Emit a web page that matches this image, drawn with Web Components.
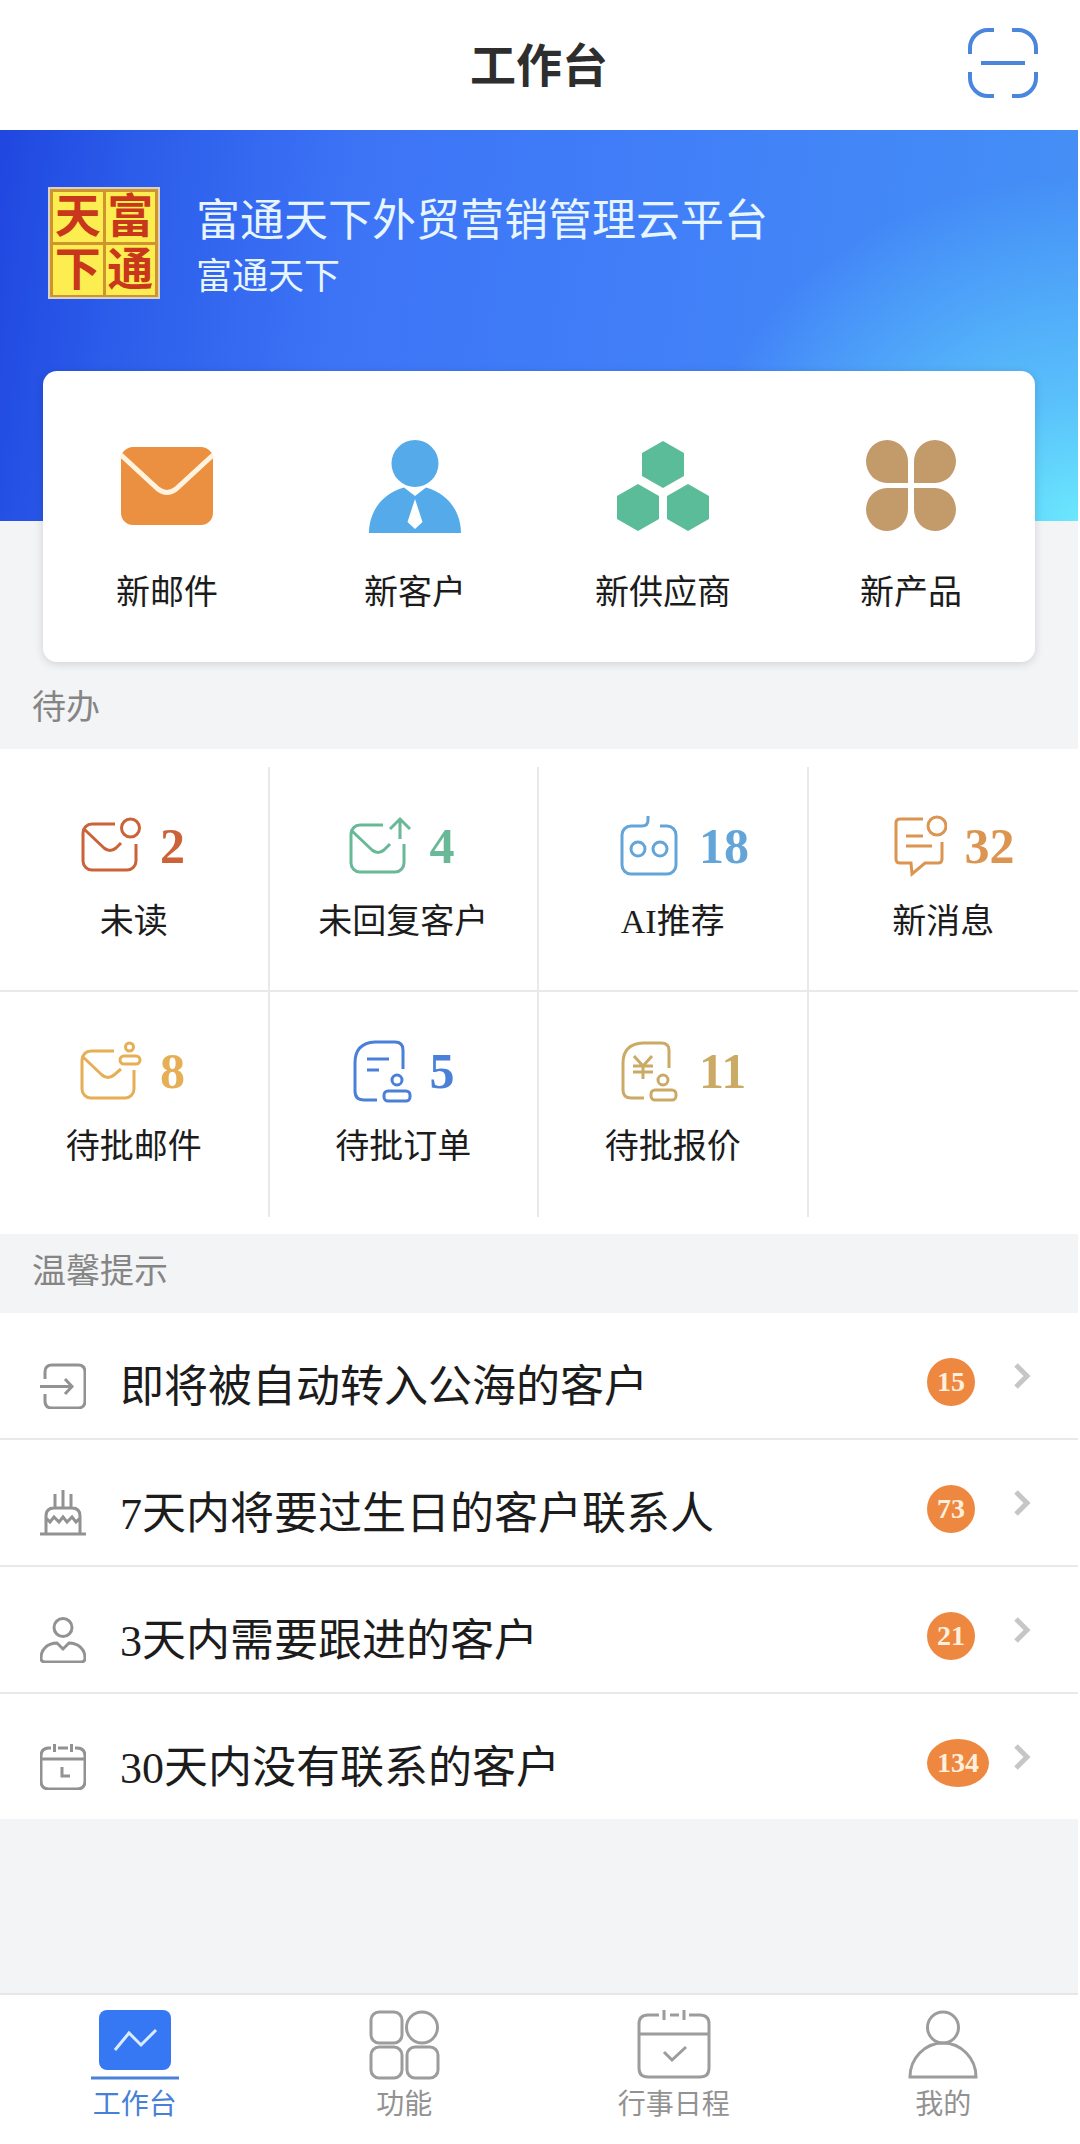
<!DOCTYPE html>
<html lang="zh-CN">
<head>
<meta charset="UTF-8">
<meta name="viewport" content="width=device-width, initial-scale=1.0">
<title>工作台</title>
<style>
    html {
        background: #fff;
    }
    body {
        margin: 0 2px 0 0;
        min-height: 100vh;
        display: flex;
        flex-direction: column;
        color: #1c1c1c;
        font-family: "Liberation Serif", "Noto Sans CJK SC", sans-serif;
    }
    main {
        flex: 1;
        background: #f3f4f6;
    }
</style>
</head>
<body>
    <page-header>工作台</page-header>
    <main>
        <company-banner>
            <span slot="name">富通天下外贸营销管理云平台</span>
            <span slot="short">富通天下</span>
        </company-banner>
        <quick-panel>
            <quick-action icon="mail">新邮件</quick-action>
            <quick-action icon="customer">新客户</quick-action>
            <quick-action icon="supplier">新供应商</quick-action>
            <quick-action icon="product">新产品</quick-action>
        </quick-panel>
        <section-title style="--space-top: 8px">待办</section-title>
        <todo-grid>
            <todo-item icon="unread" count="2" color="#cb6238">未读</todo-item>
            <todo-item icon="unreplied" count="4" color="#69b898">未回复客户</todo-item>
            <todo-item icon="robot" count="18" color="#63a5d8">AI推荐</todo-item>
            <todo-item icon="message" count="32" color="#dc9550">新消息</todo-item>
            <todo-item icon="mailApproval" count="8" color="#e6ae55">待批邮件</todo-item>
            <todo-item icon="orderApproval" count="5" color="#4a80d8">待批订单</todo-item>
            <todo-item icon="quoteApproval" count="11" color="#cbaa66">待批报价</todo-item>
        </todo-grid>
        <section-title>温馨提示</section-title>
        <tip-list>
            <tip-row icon="transfer" count="15">即将被自动转入公海的客户</tip-row>
            <tip-row icon="birthday" count="73">7天内将要过生日的客户联系人</tip-row>
            <tip-row icon="follow" count="21">3天内需要跟进的客户</tip-row>
            <tip-row icon="calendar" count="134">30天内没有联系的客户</tip-row>
        </tip-list>
    </main>
    <tab-bar>
        <tab-item icon="workbench" active>工作台</tab-item>
        <tab-item icon="features">功能</tab-item>
        <tab-item icon="schedule">行事日程</tab-item>
        <tab-item icon="mine">我的</tab-item>
    </tab-bar>

<script>
// 图标：宽、高、内容
const ICONS = {
    scan: [70, 70, `<g fill="none" stroke="#4a87dc" stroke-width="4">
        <path d="M2 26V20A18 18 0 0 1 20 2h6M44 2h6a18 18 0 0 1 18 18v6M68 44v6a18 18 0 0 1-18 18h-6M26 68h-6A18 18 0 0 1 2 50v-6M13 35h44"/></g>`],
    mail: [96, 96, `<rect x="2" y="9" width="92" height="78" rx="12" fill="#ea9040"/>
        <path d="M2 17L39 51q9 7 18 0L94 17" fill="none" stroke="#fff3e0" stroke-width="5"/>`],
    customer: [96, 96, `<g fill="#55aaea"><circle cx="48" cy="25.500" r="23.500"/>
        <path d="M37 49.500L48 58l11-8.500C80 55 94 73 94 95H2C2 73 16 55 37 49.500z"/></g>
        <path d="M48 61l-7.500 23 7.500 7 7.500-7z" fill="#fff"/>`],
    supplier: [96, 96, `<g fill="#5bbc99"><path d="M48 3l21 12v23L48 50 27 38V15z"/>
        <path d="M23 46l21 12v23L23 93 2 81V58z"/><path d="M73 46l21 12v23L73 93 52 81V58z"/></g>`],
    product: [96, 96, `<g fill="#c39b6b"><path d="M45 45H24A21 21.500 0 1 1 45 24z"/><path d="M51 45h21a21 21.500 0 1 0-21-21z"/>
        <path d="M45 50H24a21 21.500 0 1 0 21 21z"/><path d="M51 50h21a21 21.500 0 1 1-21 21z"/></g>`],
    unread: [64, 64, `<path d="M37 10H14a9 9 0 0 0-9 9v28a9 9 0 0 0 9 9h35a9 9 0 0 0 9-9V30M6 15l20 19q6 5 12 0l5-5"/><circle cx="52.500" cy="14" r="9"/>`],
    unreplied: [64, 64, `<path d="M35 11H12a9 9 0 0 0-9 9v29a9 9 0 0 0 9 9h35a9 9 0 0 0 9-9V30M4 17l20 19q6 5 12 0l6-6M52 25V6M42 15L52 5l10 10"/>`],
    robot: [64, 64, `<path d="M31 2v4q0 6-6 6H14a9 9 0 0 0-9 9v30a9 9 0 0 0 9 9h36a9 9 0 0 0 9-9V21a9 9 0 0 0-9-9h-7"/>
        <circle cx="21" cy="35" r="7"/><circle cx="43" cy="35" r="7"/>`],
    message: [60, 64, `<path d="M36 5H13q-4 0-4 4v36q0 4 4 4h11l1 11 13-11h13q4 0 4-4V28M19 22h17M19 32h26"/><circle cx="50" cy="12" r="9"/>`],
    mailApproval: [64, 64, `<path d="M36 12H13a9 9 0 0 0-9 9v29a9 9 0 0 0 9 9h34a9 9 0 0 0 9-9V31M5 18l19 18q6 5 12 0l7-6"/>
        <circle cx="51.500" cy="8" r="4"/><rect x="42" y="17" width="20" height="8" rx="4"/>`],
    orderApproval: [64, 64, `<path d="M55 30V11q0-8-8-8H27Q7 4 7 24v28q0 9 9 9h13M19 20h22M19 31h12"/>
        <circle cx="49" cy="41" r="5"/><rect x="36" y="52" width="26" height="10" rx="4"/>`],
    quoteApproval: [64, 64, `<path d="M52 29V11q0-7-8-7H26Q6 5 6 24v27q0 8 8 8h13M17 17l9 10 9-10M16 27h20M16 33h20M26 27v13"/>
        <circle cx="46" cy="41" r="5"/><rect x="34" y="51" width="25" height="10" rx="4"/>`],
    transfer: [46, 46, `<path d="M5 16V9q0-7 7-7h26q7 0 7 7v29q0 7-7 7H12q-7 0-7-7v-7M0 23.500h31M25 16l7 7.500-7 7.500"/>`],
    birthday: [46, 46, `<path d="M0 44h46M6 44V26q0-8 8-8h18q8 0 8 8v18M15 4v14M23 0v18M31 4v14M6 28l4 4 4-5 5 5 4-5 4 5 5-5 4 5 4-4"/>`],
    follow: [46, 46, `<circle cx="23" cy="10.500" r="9"/><path d="M17 26l6 6 6-6c9 0 16 6 16 15q0 4-4 4H5q-4 0-4-4C1 32 8 26 17 26z"/>`],
    calendar: [46, 46, `<path d="M11 4H9Q1 4 1 12v25q0 8 8 8h28q8 0 8-8V12q0-8-8-8h-2M18 4h10M1 15h44M14.500 0v8M31.500 0v8M22 23v9h8"/>`],
    chevron: [18, 28, `<path d="M3 3l11 11L3 25" fill="none" stroke="#c6c6c6" stroke-width="5"/>`],
    workbench: [90, 70, `<rect x="9" y="0" width="72" height="60" rx="8" fill="#3678f3"/>
        <path d="M25 40l14-17 12 12 15-15" fill="none" stroke="#d9ecff" stroke-width="3"/><path d="M1 68h88" stroke="#4a82d8" stroke-width="3"/>`],
    features: [90, 70, `<rect x="12" y="2" width="31" height="31" rx="8"/><circle cx="63" cy="17.500" r="15.500"/>
        <rect x="12" y="37" width="31" height="31" rx="8"/><rect x="48" y="37" width="31" height="31" rx="8"/>`],
    schedule: [90, 70, `<path d="M30 5H19q-9 0-9 9v44q0 9 9 9h52q9 0 9-9V14q0-9-9-9H60M41 5h9M10 24h70M35 0v10M55 0v10M35 42l8 8 14-13"/>`],
    mine: [90, 70, `<circle cx="45" cy="17.500" r="15.500"/><path d="M12 67a33 34 0 0 1 66 0z"/>`]
};

function icon(name) {
    const [w, h, body] = ICONS[name];
    return `<svg width="${w}" height="${h}" viewBox="0 0 ${w} ${h}" aria-hidden="true">${body}</svg>`;
}

class PageHeader extends HTMLElement {
    constructor() {
        super();
        this.attachShadow({ mode: 'open' });
        this.shadowRoot.innerHTML = `
            <style>
                :host {
                    display: grid;
                    grid-template-columns: 1fr auto 1fr;
                    align-items: center;
                    height: 130px;
                    padding: 0 40px;
                    background: #fff;
                }
                h1 {
                    grid-column: 2;
                    margin: 4px 0 0;
                    font-size: 46px;
                    line-height: 60px;
                    font-weight: 700;
                    color: #2e2e2e;
                }
                button {
                    justify-self: end;
                    display: flex;
                    margin: 0 0 4px;
                    padding: 0;
                    border: 0;
                    background: none;
                }
            </style>
            <h1><slot></slot></h1>
            <button type="button" aria-label="扫一扫">${icon('scan')}</button>
        `;
    }
}

class CompanyBanner extends HTMLElement {
    constructor() {
        super();
        this.attachShadow({ mode: 'open' });
        this.shadowRoot.innerHTML = `
            <style>
                :host {
                    display: flex;
                    align-items: flex-start;
                    gap: 36px;
                    box-sizing: border-box;
                    height: 391px;
                    padding: 57px 48px 0;
                    color: #e6f5ff;
                    background:
                        radial-gradient(ellipse 36% 88% at 100% 100%, #6ae8fd 0%, rgba(95, 205, 252, 0.8) 35%, rgba(75, 160, 248, 0) 100%),
                        linear-gradient(98deg, #2047e0 0%, #2b5cea 12%, #3d74f6 32%, #417ff8 60%, #4591f6 100%);
                }
                .logo {
                    display: grid;
                    grid-template-columns: 1fr 1fr;
                    gap: 3px;
                    box-sizing: border-box;
                    width: 112px;
                    height: 112px;
                    padding: 3px;
                    border: 2px solid #d8d3c4;
                    background: #cf9330;
                    color: #c8371b;
                    font-size: 46px;
                    line-height: 50px;
                    font-weight: 700;
                    text-align: center;
                }
                .logo span {
                    background: #fcee50;
                }
                .name {
                    margin-top: 5px;
                    font-size: 44px;
                    line-height: 60px;
                }
                .short {
                    font-size: 36px;
                    line-height: 50px;
                }
            </style>
            <div class="logo"><span>天</span><span>富</span><span>下</span><span>通</span></div>
            <div>
                <div class="name"><slot name="name"></slot></div>
                <div class="short"><slot name="short"></slot></div>
            </div>
        `;
    }
}

class QuickPanel extends HTMLElement {
    constructor() {
        super();
        this.attachShadow({ mode: 'open' });
        this.shadowRoot.innerHTML = `
            <style>
                :host {
                    display: grid;
                    grid-template-columns: repeat(4, 1fr);
                    position: relative;
                    box-sizing: border-box;
                    height: 291px;
                    margin: -150px 43px 0;
                    padding-top: 67px;
                    border-radius: 14px;
                    background: #fff;
                    box-shadow: 0 2px 10px rgba(0, 0, 0, 0.14);
                }
            </style>
            <slot></slot>
        `;
    }
}

class QuickAction extends HTMLElement {
    connectedCallback() {
        this.attachShadow({ mode: 'open' });
        this.shadowRoot.innerHTML = `
            <style>
                :host {
                    display: block;
                }
                button {
                    display: flex;
                    flex-direction: column;
                    align-items: center;
                    gap: 35px;
                    width: 100%;
                    padding: 0;
                    border: 0;
                    background: none;
                    color: inherit;
                    font: inherit;
                    font-size: 34px;
                    line-height: 48px;
                }
            </style>
            <button type="button">${icon(this.getAttribute('icon'))}<span><slot></slot></span></button>
        `;
    }
}

class SectionTitle extends HTMLElement {
    constructor() {
        super();
        this.attachShadow({ mode: 'open' });
        this.shadowRoot.innerHTML = `
            <style>
                :host {
                    display: block;
                    padding: calc(14px + var(--space-top, 0px)) 32px 17px;
                }
                h2 {
                    margin: 0;
                    font-size: 34px;
                    line-height: 48px;
                    font-weight: 400;
                    color: #858585;
                }
            </style>
            <h2><slot></slot></h2>
        `;
    }
}

class TodoGrid extends HTMLElement {
    constructor() {
        super();
        this.attachShadow({ mode: 'open' });
        this.shadowRoot.innerHTML = `
            <style>
                :host {
                    display: grid;
                    grid-template-columns: repeat(4, 1fr);
                    padding: 18px 0 17px;
                    background: #fff;
                }
                ::slotted(*) {
                    border-right: 2px solid #e9e9e9;
                }
                ::slotted(:nth-child(4n)) {
                    border-right: 0;
                }
                ::slotted(:nth-child(-n + 4)) {
                    border-bottom: 2px solid #e9e9e9;
                }
            </style>
            <slot></slot>
        `;
    }
}

class TodoItem extends HTMLElement {
    connectedCallback() {
        const color = this.getAttribute('color');
        this.attachShadow({ mode: 'open' });
        this.shadowRoot.innerHTML = `
            <style>
                :host {
                    display: block;
                    box-sizing: border-box;
                    height: 225px;
                }
                a {
                    display: block;
                    padding-top: 47px;
                    color: inherit;
                    text-decoration: none;
                }
                .top {
                    display: flex;
                    align-items: center;
                    gap: 18px;
                    padding-left: 78px;
                    color: ${color};
                }
                svg {
                    flex: none;
                    fill: none;
                    stroke: currentColor;
                    stroke-width: 3;
                }
                strong {
                    font-size: 50px;
                    line-height: 64px;
                }
                .label {
                    margin-top: 20px;
                    font-size: 34px;
                    line-height: 48px;
                    text-align: center;
                }
            </style>
            <a href="#">
                <div class="top">${icon(this.getAttribute('icon'))}<strong>${this.getAttribute('count')}</strong></div>
                <div class="label"><slot></slot></div>
            </a>
        `;
    }
}

class TipList extends HTMLElement {
    constructor() {
        super();
        this.attachShadow({ mode: 'open' });
        this.shadowRoot.innerHTML = `
            <style>
                :host {
                    display: block;
                    background: #fff;
                }
                ::slotted(:not(:last-child)) {
                    border-bottom: 2px solid #e9e9e9;
                }
            </style>
            <slot></slot>
        `;
    }
}

class TipRow extends HTMLElement {
    connectedCallback() {
        this.attachShadow({ mode: 'open' });
        this.shadowRoot.innerHTML = `
            <style>
                :host {
                    display: block;
                }
                a {
                    display: grid;
                    grid-template-columns: 46px 1fr 86px 18px;
                    align-items: center;
                    height: 125px;
                    padding: 0 47px 0 40px;
                    color: inherit;
                    text-decoration: none;
                }
                .icon {
                    display: flex;
                    padding-top: 20px;
                    fill: none;
                    stroke: #929292;
                    stroke-width: 3;
                }
                .text {
                    padding: 24px 0 0 34px;
                    font-size: 44px;
                    line-height: 60px;
                }
                .badge {
                    justify-self: start;
                    margin-top: 12px;
                    padding: 0 10px;
                    border-radius: 50%;
                    background: #ee8740;
                    color: #fff0dc;
                    font-size: 28px;
                    line-height: 48px;
                    font-weight: 700;
                }
                .arrow {
                    display: flex;
                }
            </style>
            <a href="#">
                <span class="icon">${icon(this.getAttribute('icon'))}</span>
                <span class="text"><slot></slot></span>
                <span class="badge">${this.getAttribute('count')}</span>
                <span class="arrow">${icon('chevron')}</span>
            </a>
        `;
    }
}

class TabBar extends HTMLElement {
    constructor() {
        super();
        this.attachShadow({ mode: 'open' });
        this.shadowRoot.innerHTML = `
            <style>
                :host {
                    display: block;
                    border-top: 2px solid #e6e8e8;
                    background: #fff;
                }
                nav {
                    display: grid;
                    grid-template-columns: repeat(4, 1fr);
                    padding: 15px 0 20px;
                }
            </style>
            <nav><slot></slot></nav>
        `;
    }
}

class TabItem extends HTMLElement {
    connectedCallback() {
        this.attachShadow({ mode: 'open' });
        this.shadowRoot.innerHTML = `
            <style>
                :host {
                    display: block;
                    color: #929292;
                }
                :host([active]) {
                    color: #4680d8;
                }
                a {
                    display: flex;
                    flex-direction: column;
                    align-items: center;
                    gap: 6px;
                    color: inherit;
                    font-size: 28px;
                    line-height: 38px;
                    text-decoration: none;
                }
                svg {
                    fill: none;
                    stroke: #9c9c9c;
                    stroke-width: 3;
                }
                :host([active]) svg {
                    stroke: none;
                }
            </style>
            <a href="#">${icon(this.getAttribute('icon'))}<span><slot></slot></span></a>
        `;
    }
}

customElements.define('page-header', PageHeader);
customElements.define('company-banner', CompanyBanner);
customElements.define('quick-panel', QuickPanel);
customElements.define('quick-action', QuickAction);
customElements.define('section-title', SectionTitle);
customElements.define('todo-grid', TodoGrid);
customElements.define('todo-item', TodoItem);
customElements.define('tip-list', TipList);
customElements.define('tip-row', TipRow);
customElements.define('tab-bar', TabBar);
customElements.define('tab-item', TabItem);
</script>
</body>
</html>
